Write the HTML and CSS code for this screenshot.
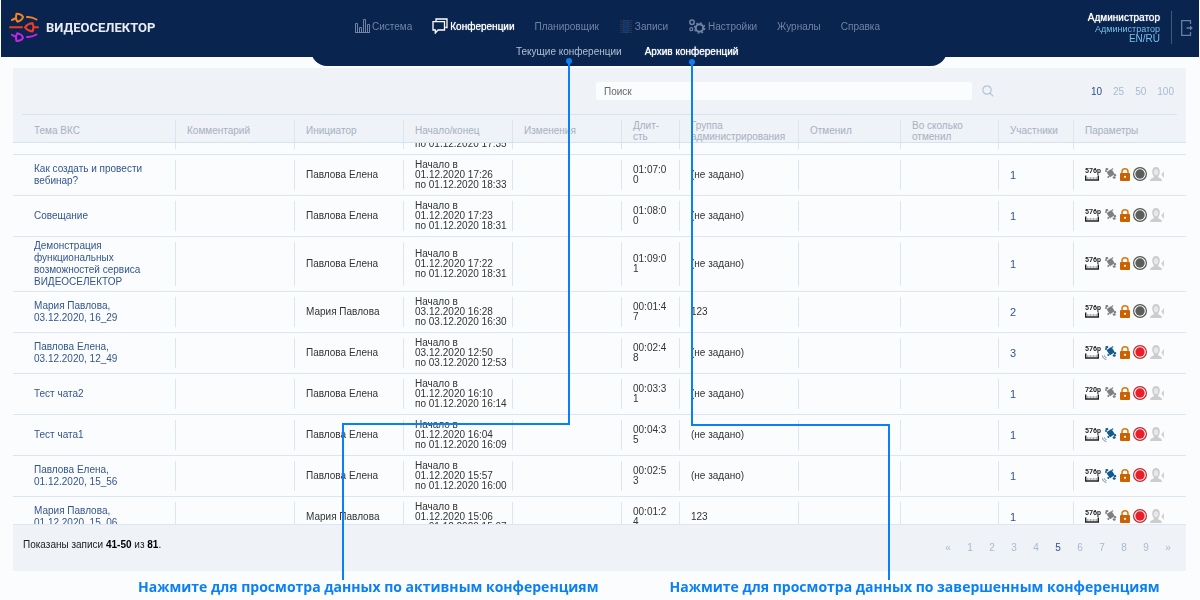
FILE: index.html
```html
<!DOCTYPE html>
<html lang="ru">

<head>
  <meta charset="UTF-8">
  <meta name="viewport" content="width=device-width, initial-scale=1.0">
  <title>Архив конференций</title>
  <link rel="stylesheet" href="styles.css">
</head>

<body>
  <!-- Иконки таблицы -->
  <svg class="sprite" aria-hidden="true">
    <symbol id="ruler" viewBox="0 0 14 6">
      <path d="M.7 .5v4.500h12.600V.5" fill="none" stroke="#222" stroke-width="1.400" />
      <path d="M2 3h10" stroke="#999" stroke-width="1.400" stroke-dasharray="1 .5" />
    </symbol>
    <symbol id="satellite" viewBox="0 0 15 15">
      <path d="M5.500 5.300l3.700-2.500 2.600 4-3.700 2.500z" fill="currentColor" stroke="currentColor" stroke-width="1.400" stroke-linejoin="round" />
      <g fill="currentColor">
        <ellipse cx="4.900" cy="2.100" rx="1.500" ry="1.200" />
        <circle cx="4" cy="4" r="1" />
        <circle cx="10.500" cy="2" r=".8" />
        <circle cx="6.300" cy="10.100" r="1" />
        <ellipse cx="13" cy="8.200" rx="1.300" ry="1.100" />
        <ellipse cx="12.200" cy="10.500" rx="1.500" ry="1.200" />
      </g>
    </symbol>
    <symbol id="waves" viewBox="0 0 15 15">
      <path d="M.5 10.500c.2 2.400 1.600 3.700 3.900 3.900M2.400 10.400c.1 1.300.8 2 2.100 2.200" fill="none" stroke="#6087b0" stroke-width=".9" />
    </symbol>
    <symbol id="lock" viewBox="0 0 10 13">
      <path d="M2 6V3.800a3 3 0 0 1 6 0V6" fill="none" stroke="#d9780f" stroke-width="1.500" />
      <rect y="5" width="10" height="8" rx="1" fill="#cb6100" />
      <circle cx="5" cy="8.800" r="1.100" fill="#fff" />
    </symbol>
    <symbol id="record" viewBox="0 0 14 14">
      <circle cx="7" cy="7" r="6.400" fill="#fff" stroke="currentColor" stroke-width="1.200" />
      <circle cx="7" cy="7" r="4.700" />
    </symbol>
    <symbol id="person" viewBox="0 0 14 14">
      <path d="M0 14c.1-2.200 1.300-3 3.600-3.600l.3-1.200C2.800 8 2.100 6.500 2.200 4.200 2.300 1.500 3.800 0 6 0s3.700 1.500 3.800 4.200c0 2.300-.6 3.800-1.700 5l.3 1.200c2.300.6 3.500 1.400 3.600 3.600z" fill="#cdcdcd" />
      <ellipse cx="6" cy="5.200" rx="2.200" ry="3" fill="#e8e8e8" />
      <path d="M13.900 4v7l-2.600-3.500z" fill="#cdcdcd" />
    </symbol>
  </svg>

  <header class="header">
    <a class="logo" href="#">
      <svg width="30" height="31" viewBox="0 0 30 31" fill="none" stroke-width="2" stroke-linecap="round" stroke-linejoin="round" aria-hidden="true">
        <g stroke="#f58220">
          <path d="M7.500 1.800c3 0 5.500 1.200 6.500 3.200-.5 2-3 4-5.500 4.700C7 8 6.800 4.500 7.500 1.800zM3 8l4-2" />
          <path d="M18 5c3.500-.2 6.500.8 9.500 2.500" />
        </g>
        <g stroke="#ee3a24">
          <path d="M1 15.300h12M16 15.300c1.500-2 4-3.700 7.500-4.200 1.200 2.500 1.200 6 0 8.500-3.500-.6-6-2.300-7.500-4.300zM25 15.300h4" />
        </g>
        <g stroke="#c724e8">
          <path d="M7.500 29c3 0 5.500-1.200 6.500-3.200-.5-2-3-4-5.500-4.700C7 22.800 6.800 26.300 7.500 29zM3 22.800l4 2" />
          <path d="M18 25c3.500.2 6.500-.8 9.500-2.500" />
        </g>
      </svg>
      <span>ВИДЕОСЕЛЕКТОР</span>
    </a>

    <div class="tabs">
      <nav class="menu">
        <a href="#">
          <svg width="15" height="14" viewBox="0 0 15 14" fill="none" stroke="currentColor" aria-hidden="true">
            <path d="M.5 13.500v-9h2v9M4.500 13.500v-5h2v5M8.500 13.500V.5h2v13M12.500 13.500v-8h2v8M0 13.500h15" />
          </svg>
          Система
        </a>
        <a class="active" href="#">
          <svg width="16" height="16" viewBox="0 0 16 16" fill="none" stroke="currentColor" stroke-width="1.300" aria-hidden="true">
            <path d="M4 3.500V1h11v8.500h-1.700" />
            <path d="M1 3.700h11.500V12H6l-2.700 3v-3H1z" />
          </svg>
          Конференции
        </a>
        <a href="#">Планировщик</a>
        <a href="#">
          <svg width="14" height="13" viewBox="0 0 14 13" fill="none" aria-hidden="true">
            <path d="M2 0v13M12 0v13" stroke="#343c50" stroke-width="1.500" stroke-dasharray="1 1" />
            <path d="M4 .5h6v12H4zM4 6.500h6" stroke="#2f3850" fill="#0d3670" />
          </svg>
          Записи
        </a>
        <a href="#">
          <svg width="18" height="15" viewBox="0 0 18 15" fill="none" stroke="currentColor" aria-hidden="true">
            <circle cx="11.500" cy="9" r="3.700" stroke-width="2" />
            <circle cx="11.500" cy="9" r="5.200" stroke-width="1.200" stroke-dasharray="2 2.080" />
            <circle cx="4" cy="3.200" r="2.200" stroke-width="1.500" />
            <circle cx="3.300" cy="10.200" r="1.500" stroke-width="1.200" />
          </svg>
          Настройки
        </a>
        <a href="#">Журналы</a>
        <a href="#">Справка</a>
      </nav>
      <nav class="submenu">
        <a href="#">Текущие конференции</a>
        <a class="active" href="#">Архив конференций</a>
      </nav>
    </div>

    <div class="user">
      <div class="user-info">
        <strong>Администратор</strong>
        <a href="#">Администратор</a>
        <a class="lang" href="#">EN/RU</a>
      </div>
      <button class="logout" type="button" aria-label="Выход">
        <svg width="12" height="16" viewBox="0 0 12 16" fill="none" stroke="#6c7f9f" stroke-width="1.300" aria-hidden="true">
          <path d="M9.500 4V.7H.7v14.600h8.800V12M5.500 8h5" />
          <path d="M9 5.500L11.800 8 9 10.500z" fill="#6c7f9f" stroke="none" />
        </svg>
      </button>
    </div>
  </header>

  <main class="panel">
    <div class="toolbar">
      <form class="search">
        <input type="text" placeholder="Поиск" aria-label="Поиск">
        <button type="submit" aria-label="Найти">
          <svg width="12" height="12" viewBox="0 0 12 12" fill="none" stroke="#b5c3d6" stroke-width="1.200" aria-hidden="true">
            <circle cx="5" cy="5" r="4.200" />
            <path d="M8 8l3.300 3.300" />
          </svg>
        </button>
      </form>
      <div class="page-size">
        <a class="active" href="#">10</a>
        <a href="#">25</a>
        <a href="#">50</a>
        <a href="#">100</a>
      </div>
    </div>

    <div class="table-scroll" id="tableScroll">
      <table>
        <colgroup>
          <col class="c-topic">
          <col class="c-text">
          <col class="c-date">
          <col class="c-date">
          <col class="c-date">
          <col class="c-length">
          <col class="c-text">
          <col class="c-cancel">
          <col class="c-when">
          <col class="c-members">
          <col class="c-params">
        </colgroup>
        <thead>
          <tr>
            <th>Тема ВКС</th>
            <th>Комментарий</th>
            <th>Инициатор</th>
            <th>Начало/конец</th>
            <th>Изменения</th>
            <th>Длит-<br>сть</th>
            <th>Группа администрирования</th>
            <th>Отменил</th>
            <th>Во сколько<br>отменил</th>
            <th>Участники</th>
            <th>Параметры</th>
          </tr>
        </thead>
        <tbody id="conferenceList"></tbody>
      </table>
    </div>

    <div class="footer">
      <p>Показаны записи <b>41-50</b> из <b>81</b>.</p>
      <nav class="pager">
        <a href="#">«</a>
        <a href="#">1</a>
        <a href="#">2</a>
        <a href="#">3</a>
        <a href="#">4</a>
        <a class="active" href="#">5</a>
        <a href="#">6</a>
        <a href="#">7</a>
        <a href="#">8</a>
        <a href="#">9</a>
        <a href="#">»</a>
      </nav>
    </div>
  </main>

  <div class="hints">
    <p>Нажмите для просмотра данных по активным конференциям</p>
    <p>Нажмите для просмотра данных по завершенным конференциям</p>
  </div>

  <!-- Линии от подсказок к вкладкам -->
  <svg class="pointers" width="1200" height="600" fill="none" stroke="#0a80f5" stroke-width="2" aria-hidden="true">
    <path d="M569 62V424H343V580" />
    <path d="M692 62V425H889V580" />
    <g fill="#0a80f5" stroke="none">
      <circle cx="569" cy="61" r="3" />
      <circle cx="692" cy="62" r="3" />
    </g>
  </svg>

  <script>
    const conferences = [
      { topic: 'Вебинар', owner: 'Павлова Елена', start: '01.12.2020 17:30', end: '01.12.2020 17:35', length: '00:05:00', group: '(не задано)', members: 1, size: '576p' },
      { topic: 'Как создать и провести вебинар?', owner: 'Павлова Елена', start: '01.12.2020 17:26', end: '01.12.2020 18:33', length: '01:07:00', group: '(не задано)', members: 1, size: '576p' },
      { topic: 'Совещание', owner: 'Павлова Елена', start: '01.12.2020 17:23', end: '01.12.2020 18:31', length: '01:08:00', group: '(не задано)', members: 1, size: '576p' },
      { topic: 'Демонстрация функциональных возможностей сервиса ВИДЕОСЕЛЕКТОР', owner: 'Павлова Елена', start: '01.12.2020 17:22', end: '01.12.2020 18:31', length: '01:09:01', group: '(не задано)', members: 1, size: '576p' },
      { topic: 'Мария Павлова, 03.12.2020, 16_29', owner: 'Мария Павлова', start: '03.12.2020 16:28', end: '03.12.2020 16:30', length: '00:01:47', group: '123', members: 2, size: '576p' },
      { topic: 'Павлова Елена, 03.12.2020, 12_49', owner: 'Павлова Елена', start: '03.12.2020 12:50', end: '03.12.2020 12:53', length: '00:02:48', group: '(не задано)', members: 3, size: '576p', live: true, recorded: true },
      { topic: 'Тест чата2', owner: 'Павлова Елена', start: '01.12.2020 16:10', end: '01.12.2020 16:14', length: '00:03:31', group: '(не задано)', members: 1, size: '720p', recorded: true },
      { topic: 'Тест чата1', owner: 'Павлова Елена', start: '01.12.2020 16:04', end: '01.12.2020 16:09', length: '00:04:35', group: '(не задано)', members: 1, size: '576p', live: true, recorded: true },
      { topic: 'Павлова Елена, 01.12.2020, 15_56', owner: 'Павлова Елена', start: '01.12.2020 15:57', end: '01.12.2020 16:00', length: '00:02:53', group: '(не задано)', members: 1, size: '576p', live: true, recorded: true },
      { topic: 'Мария Павлова, 01.12.2020, 15_06', owner: 'Мария Павлова', start: '01.12.2020 15:06', end: '01.12.2020 15:07', length: '00:01:24', group: '123', members: 1, size: '576p', recorded: true }
    ];

    const list = document.getElementById('conferenceList');

    conferences.forEach(item => {
      const tr = document.createElement('tr');
      tr.innerHTML = `
        <td><a href="#">${item.topic}</a></td>
        <td></td>
        <td>${item.owner}</td>
        <td class="nowrap">Начало в<br>${item.start}<br>по ${item.end}</td>
        <td></td>
        <td class="length">${item.length}</td>
        <td>${item.group}</td>
        <td></td>
        <td></td>
        <td><a class="members" href="#">${item.members}</a></td>
        <td>
          <div class="params">
            <span class="size">${item.size}<svg width="14" height="6"><use href="#ruler"/></svg></span>
            <svg class="${item.live ? 'sat live' : 'sat'}" width="15" height="15"><use href="#satellite"/>${item.live ? '<use href="#waves"/>' : ''}</svg>
            <svg width="10" height="13"><use href="#lock"/></svg>
            <svg class="${item.recorded ? 'rec on' : 'rec'}" width="14" height="14"><use href="#record"/></svg>
            <svg width="14" height="14"><use href="#person"/></svg>
          </div>
        </td>
      `;
      list.appendChild(tr);
    });

    // Список открыт на второй записи страницы
    document.getElementById('tableScroll').scrollTop = 29;
  </script>
</body>

</html>
```
FILE: styles.css
```css
* {
  box-sizing: border-box;
}

body {
  margin: 0;
  background-color: #fbfcfe;
  color: #333;
  font-family: "Liberation Sans", Arial, sans-serif;
  font-size: 10px;
}

a {
  color: inherit;
  text-decoration: none;
}

p {
  margin: 0;
}

button {
  padding: 0;
  border: none;
  background: none;
  cursor: pointer;
}

svg {
  display: block;
  flex: none;
}

.sprite {
  position: absolute;
  width: 0;
  height: 0;
}

/* Header */
.header {
  display: flex;
  align-items: flex-start;
  height: 57px;
  margin: 0 1px;
  background-color: #08244f;
}

.logo {
  display: flex;
  align-items: center;
  gap: 7px;
  width: 310px;
  padding: 12px 0 0 8px;
  color: #e8ecf2;
  font-family: Roboto, sans-serif;
  font-size: 13px;
  font-weight: bold;
}

.tabs {
  width: 636px;
  height: 66px;
  padding: 16px 0 0 44px;
  border-radius: 0 0 16px 16px;
  background-color: #08244f;
}

.menu {
  display: flex;
  align-items: center;
  gap: 20px;
  height: 20px;
  color: #7384a2;
}

.menu a {
  display: flex;
  align-items: center;
  gap: 2px;
}

.menu .active,
.submenu .active {
  color: #fff;
  text-shadow: 0 0 1px #fff;
}

.submenu {
  display: flex;
  align-items: center;
  gap: 23px;
  height: 30px;
  padding-left: 161px;
  color: #b4bfd0;
}

.user {
  display: flex;
  align-items: flex-start;
  gap: 11px;
  margin-left: auto;
  padding: 11px 6px 0 0;
}

.user-info {
  display: flex;
  flex-direction: column;
  align-items: flex-end;
  color: #79bfe8;
  font-size: 9px;
  line-height: 10px;
}

.user-info strong {
  color: #fff;
  font-size: 10px;
  font-weight: normal;
  line-height: 13px;
  text-shadow: 0 0 1px #fff;
}

.user-info .lang {
  font-size: 10px;
}

.logout {
  display: flex;
  align-items: center;
  height: 33px;
  padding-left: 9px;
  border-left: 1px solid #41577c;
}

/* Panel */
.panel {
  margin: 11px 14px 0 13px;
  background-color: #eff2f7;
}

.toolbar {
  display: flex;
  justify-content: flex-end;
  align-items: center;
  gap: 97px;
  height: 47px;
  margin: 0 9px;
  padding-right: 3px;
  border-bottom: 1px solid #d8e4ef;
}

.search {
  display: flex;
  align-items: center;
  gap: 10px;
}

.search input {
  width: 376px;
  height: 18px;
  padding: 0 8px;
  border: none;
  border-radius: 2px;
  background-color: #fbfcfe;
  font: inherit;
}

.search input::placeholder {
  color: #666;
}

.page-size {
  display: flex;
  gap: 11px;
  color: #a9bad1;
}

.page-size .active,
.pager .active {
  color: #2c4f95;
}

/* Table */
.table-scroll {
  height: 410px;
  overflow-y: auto;
  scrollbar-width: none;
  border-bottom: 1px solid #dfe6ef;
  background-color: #fbfcfe;
}

table {
  width: 100%;
  table-layout: fixed;
  border-collapse: separate;
  border-spacing: 0;
}

.c-topic { width: 162px; }
.c-text { width: 119px; }
.c-date { width: 109px; }
.c-length { width: 58px; }
.c-cancel { width: 102px; }
.c-when { width: 98px; }
.c-members { width: 75px; }
.c-params { width: 114px; }

th {
  position: sticky;
  top: 0;
  height: 28px;
  padding: 4px 0 0 12px;
  border-bottom: 1px solid #d5e3ef;
  background: #eff2f7 linear-gradient(#dbe5ef, #dbe5ef) 0 5px / 1px 100% no-repeat;
  color: #a5b1c1;
  font-weight: normal;
  line-height: 11px;
  text-align: left;
}

td {
  height: 41px;
  padding: 3px 10px 3px 12px;
  border-bottom: 1px solid #dde6f0;
  background: linear-gradient(#dde6f0, #dde6f0) 0 5px / 1px calc(100% - 10px) no-repeat;
  line-height: 10px;
}

th:first-child,
td:first-child {
  padding-right: 20px;
  padding-left: 21px;
  background-image: none;
}

td a {
  color: #33558f;
  line-height: 12px;
}

td:first-child a {
  display: block;
}

.members {
  font-size: 11px;
}

.nowrap {
  white-space: nowrap;
}

.length {
  word-break: break-all;
}

.params {
  display: flex;
  align-items: center;
  gap: 3px;
  padding-bottom: 2px;
}

.size {
  width: 14px;
  color: #222;
  font-family: Roboto, sans-serif;
  font-size: 7px;
  font-weight: bold;
  line-height: 7px;
  white-space: nowrap;
}

.sat {
  color: #808080;
}

.sat.live {
  color: #135a8c;
}

.rec {
  color: #555;
  fill: #5d5d5a;
}

.rec.on {
  color: #c02832;
  fill: #ee1c25;
}

/* Footer */
.footer {
  display: flex;
  justify-content: space-between;
  height: 46px;
  padding: 14px 7px 0 10px;
  color: #222;
}

.footer b {
  color: #000;
}

.pager {
  display: flex;
  padding-top: 3px;
  color: #a9bad1;
}

.pager a {
  width: 22px;
  text-align: center;
}

/* Hints */
.hints {
  display: flex;
  gap: 71px;
  padding: 6px 0 0 138px;
  color: #0a80f5;
  font-family: "Open Sans", "Noto Sans", sans-serif;
  font-size: 14px;
  font-weight: bold;
  line-height: 19px;
  white-space: nowrap;
}

.pointers {
  position: absolute;
  top: 0;
  left: 0;
  pointer-events: none;
}
```
